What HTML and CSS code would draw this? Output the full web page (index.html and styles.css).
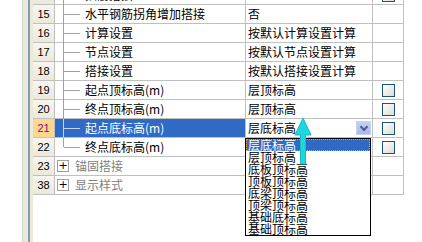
FILE: index.html
```html
<!DOCTYPE html>
<html lang="zh-CN">
<head>
    <meta charset="UTF-8">
    <title>属性编辑</title>
    <link rel="stylesheet" href="styles.css">
</head>
<body>
    <div class="screen">
        <div class="side"></div>

        <div class="grid">
            <div class="rows">
                <div class="row cut">
                    <div class="num">14</div>
                    <div class="name child">插筋搭接</div>
                    <div class="val"></div>
                    <div class="chk"><span class="box"></span></div>
                </div>
                <div class="row">
                    <div class="num">15</div>
                    <div class="name child">水平钢筋拐角增加搭接</div>
                    <div class="val">否</div>
                    <div class="chk"></div>
                </div>
                <div class="row">
                    <div class="num">16</div>
                    <div class="name child">计算设置</div>
                    <div class="val">按默认计算设置计算</div>
                    <div class="chk"></div>
                </div>
                <div class="row">
                    <div class="num">17</div>
                    <div class="name child">节点设置</div>
                    <div class="val">按默认节点设置计算</div>
                    <div class="chk"></div>
                </div>
                <div class="row">
                    <div class="num">18</div>
                    <div class="name child">搭接设置</div>
                    <div class="val">按默认搭接设置计算</div>
                    <div class="chk"></div>
                </div>
                <div class="row">
                    <div class="num">19</div>
                    <div class="name child">起点顶标高(m)</div>
                    <div class="val">层顶标高</div>
                    <div class="chk"><span class="box"></span></div>
                </div>
                <div class="row">
                    <div class="num">20</div>
                    <div class="name child">终点顶标高(m)</div>
                    <div class="val">层顶标高</div>
                    <div class="chk"><span class="box"></span></div>
                </div>
                <div class="row selected">
                    <div class="num">21</div>
                    <div class="name child">起点底标高(m)</div>
                    <div class="val editing">
                        层底标高
                        <span class="drop-btn"></span>
                        <ul class="drop-list">
                            <li class="active">层底标高</li>
                            <li>层顶标高</li>
                            <li>底板顶标高</li>
                            <li>顶板顶标高</li>
                            <li>底梁顶标高</li>
                            <li>顶梁顶标高</li>
                            <li>基础底标高</li>
                            <li>基础顶标高</li>
                        </ul>
                    </div>
                    <div class="chk"><span class="box"></span></div>
                </div>
                <div class="row">
                    <div class="num">22</div>
                    <div class="name child last">终点底标高(m)</div>
                    <div class="val"></div>
                    <div class="chk"><span class="box"></span></div>
                </div>
                <div class="row group">
                    <div class="num">23</div>
                    <div class="name"><span class="plus">+</span>锚固搭接</div>
                    <div class="val"></div>
                    <div class="chk"></div>
                </div>
                <div class="row group">
                    <div class="num">38</div>
                    <div class="name"><span class="plus">+</span>显示样式</div>
                    <div class="val"></div>
                    <div class="chk"></div>
                </div>
            </div>
        </div>

        <svg class="pointer" width="20" height="50" viewBox="0 0 20 50">
            <polygon points="9,1 1,18 6.5,18 6.5,47 11.5,47 11.5,18 17,18" fill="#1fd6dc" stroke="#12bcc4" stroke-width="1"/>
        </svg>
    </div>
</body>
</html>
```

FILE: styles.css
```css
body {
    margin: 0;
    background: #fff;
    font-family: "Noto Sans CJK SC", "Liberation Sans", sans-serif;
    font-size: 12px;
    color: #000;
}

.screen {
    position: relative;
    display: flex;
    width: 422px;
    height: 242px;
    overflow: hidden;
}

.side {
    width: 33px;
    flex: none;
    background: linear-gradient(to right,
        #fff 0 22px,
        #d6d3c8 22px 23px,
        #ece9d8 23px 28px,
        #7f9db9 28px 30px,
        #ece9d8 30px 33px);
}

.grid {
    width: 371px;
    flex: none;
}

.row {
    display: grid;
    grid-template-columns: 22px 191px 127px 31px;
    height: 19px;
}

.row.cut {
    margin-top: -14px;
}

.row > div {
    border-right: 1px solid #c0c0c0;
    border-bottom: 1px solid #c0c0c0;
    line-height: 18px;
    white-space: nowrap;
}

.num {
    background: linear-gradient(#f7f6ef, #ebe9dc);
    font-family: "Liberation Sans", Arial, sans-serif;
    font-size: 11px;
    text-align: center;
}

.name {
    position: relative;
    padding-left: 30px;
}

.name.child::before {
    content: "";
    position: absolute;
    left: 8px;
    top: 0;
    bottom: -1px;
    width: 1px;
    background: #a0a0a0;
}

.name.child::after {
    content: "";
    position: absolute;
    left: 9px;
    top: 9px;
    width: 16px;
    height: 1px;
    background: #a0a0a0;
}

.name.last::before {
    bottom: 9px;
}

.val {
    position: relative;
    padding-left: 2px;
}

.chk {
    display: flex;
    align-items: center;
    justify-content: center;
}

.box {
    width: 11px;
    height: 11px;
    border: 1px solid #1c5180;
    background: linear-gradient(135deg, #fff, #dcdcd6);
    margin-left: 1px;
}

.selected .num {
    background: #fdd690;
    color: #7b0a80;
}

.selected .name {
    background: #316ac5;
    color: #fff;
}

.selected .name::before,
.selected .name::after {
    background: #c8d4ee;
}

.group .name {
    padding-left: 2px;
    color: #808080;
    display: flex;
    align-items: center;
}

.plus {
    width: 10px;
    height: 10px;
    border: 1px solid #a0a0a0;
    background: #fff;
    color: #000;
    font-family: "DejaVu Sans", sans-serif;
    font-size: 11px;
    line-height: 10px;
    text-align: center;
    margin-right: 6px;
}

.drop-btn {
    position: absolute;
    right: 1px;
    top: 2px;
    width: 15px;
    height: 14px;
    border: 1px solid #c8d2f4;
    background: linear-gradient(#c5d0f8, #a7b6f0);
    box-sizing: border-box;
}

.drop-btn::after {
    content: "";
    position: absolute;
    left: 4px;
    top: 2px;
    width: 4px;
    height: 4px;
    border-right: 2px solid #4d6185;
    border-bottom: 2px solid #4d6185;
    transform: rotate(45deg);
}

.drop-list {
    position: absolute;
    left: -1px;
    top: 19px;
    width: 124px;
    margin: 0;
    padding: 0;
    list-style: none;
    border: 1px solid #000;
    background: #fff;
    z-index: 2;
}

.drop-list li {
    height: 12px;
    line-height: 12px;
    padding-left: 2px;
    font-size: 12px;
    box-sizing: border-box;
}

.drop-list li.active {
    background: #316ac5;
    color: #fff;
    outline: 1px dotted #e0a040;
    outline-offset: -1px;
}

.pointer {
    position: absolute;
    left: 294px;
    top: 117px;
    z-index: 3;
}
```
